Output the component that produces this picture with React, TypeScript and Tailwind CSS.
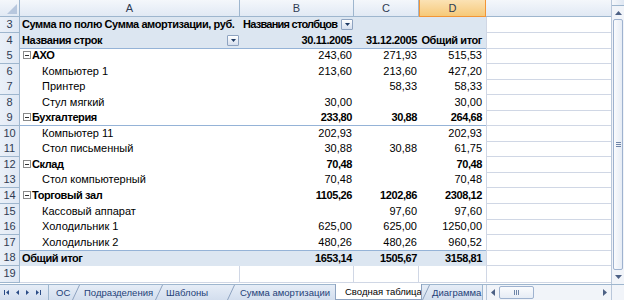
import React from "react";

const COLS = "grid grid-cols-[20px_220px_114px_65px_67px_125px]";
const ROWH = "h-[15.55px]";
const BOLD = " font-bold tracking-[-0.4px]";

type DataRow = {
  n: number;
  label: string;
  group?: boolean;
  b?: string;
  c?: string;
  d?: string;
  bold?: boolean;
  lineBelow?: boolean;
};

const data: DataRow[] = [
  { n: 5, label: "АХО", group: true, b: "243,60", c: "271,93", d: "515,53" },
  { n: 6, label: "Компьютер 1", b: "213,60", c: "213,60", d: "427,20" },
  { n: 7, label: "Принтер", c: "58,33", d: "58,33" },
  { n: 8, label: "Стул мягкий", b: "30,00", d: "30,00" },
  { n: 9, label: "Бухгалтерия", group: true, b: "233,80", c: "30,88", d: "264,68", bold: true, lineBelow: true },
  { n: 10, label: "Компьютер 11", b: "202,93", d: "202,93" },
  { n: 11, label: "Стол письменный", b: "30,88", c: "30,88", d: "61,75" },
  { n: 12, label: "Склад", group: true, b: "70,48", d: "70,48", bold: true },
  { n: 13, label: "Стол компьютерный", b: "70,48", d: "70,48" },
  { n: 14, label: "Торговый зал", group: true, b: "1105,26", c: "1202,86", d: "2308,12", bold: true },
  { n: 15, label: "Кассовый аппарат", c: "97,60", d: "97,60" },
  { n: 16, label: "Холодильник 1", b: "625,00", c: "625,00", d: "1250,00" },
  { n: 17, label: "Холодильник 2", b: "480,26", c: "480,26", d: "960,52" },
];

function RowNum({ n }: { n: number }) {
  return (
    <div className="bg-gradient-to-r from-[#eaf0f8] to-[#e0e8f4] border-r border-b border-[#9eb6ce] text-center text-[11px] leading-[15px] text-[#2f3b52]">
      {n}
    </div>
  );
}

function Dropdown() {
  return (
    <span className="absolute right-[1px] top-[2px] w-[12px] h-[11px] border border-[#8ea3c0] rounded-[1px] bg-gradient-to-b from-white to-[#d5dfee] flex items-center justify-center">
      <svg width="5" height="3" viewBox="0 0 5 3">
        <polygon points="0,0 5,0 2.5,3" fill="#1d3a63" />
      </svg>
    </span>
  );
}

function Collapse() {
  return (
    <span className="inline-flex w-[8px] h-[8px] border border-[#8a8a8a] bg-white items-center justify-center mr-[1px] align-middle relative top-[-1px]">
      <span className="block w-[4px] h-[1px] bg-[#333]" />
    </span>
  );
}

function ECell({ last }: { last?: boolean }) {
  return <div className={"border-l border-[#d0d7e5] " + (last ? "" : "border-b")} />;
}

export default function App() {
  return (
    <div className="w-[624px] h-[300px] overflow-hidden bg-white flex flex-col font-['Liberation_Sans',Arial,sans-serif] text-[11px] text-black">
      <div className="flex h-[284px]">
        {/* sheet */}
        <div className="w-[611px] h-[284px] overflow-hidden flex flex-col">
          {/* column headers */}
          <div className={COLS + " h-[17px] shrink-0"}>
            <div className="relative bg-gradient-to-b from-[#f4f7fb] to-[#e1e9f4] border-r border-b border-[#9eb6ce]">
              <svg className="absolute right-[2px] bottom-[2px]" width="10" height="10" viewBox="0 0 10 10">
                <polygon points="10,0 10,10 0,10" fill="#b7c7de" />
              </svg>
            </div>
            {["A", "B", "C"].map((l) => (
              <div
                key={l}
                className="bg-gradient-to-b from-[#f4f7fb] to-[#e1e9f4] border-r border-b border-[#9eb6ce] text-center leading-[16px] text-[#2f3b52]"
              >
                {l}
              </div>
            ))}
            <div className="bg-gradient-to-b from-[#fbe2b4] to-[#f6c978] border border-[#f29536] border-t-0 text-center leading-[16px] text-[#2f3b52]">
              D
            </div>
            <div className="bg-gradient-to-b from-[#f4f7fb] to-[#e1e9f4] border-b border-[#9eb6ce]" />
          </div>

          {/* row 3 */}
          <div className={COLS + " " + ROWH + " shrink-0"}>
            <RowNum n={3} />
            <div className="bg-[#dce6f1] relative">
              <span className={"absolute left-[2px] top-0 leading-[15px] whitespace-nowrap z-10" + BOLD}>
                Сумма по полю Сумма амортизации, руб.
              </span>
            </div>
            <div className="bg-[#dce6f1] relative">
              <span className="absolute left-[3px] top-0 leading-[15px] whitespace-nowrap font-bold tracking-[-0.75px]">
                Названия столбцов
              </span>
              <Dropdown />
            </div>
            <div className="bg-[#dce6f1]" />
            <div className="bg-[#dce6f1]" />
            <ECell />
          </div>

          {/* row 4 */}
          <div className={COLS + " " + ROWH + " shrink-0"}>
            <RowNum n={4} />
            <div className="bg-[#dce6f1] border-b border-[#95b3d7] relative">
              <span className={"absolute left-[2px] top-0 leading-[15px] whitespace-nowrap" + BOLD}>Названия строк</span>
              <Dropdown />
            </div>
            {["30.11.2005", "31.12.2005", "Общий итог"].map((t, i) => (
              <div
                key={t}
                className={
                  "bg-[#dce6f1] border-b border-[#95b3d7] text-right leading-[15px] whitespace-nowrap" +
                  BOLD +
                  (i === 2 ? " pr-[4px]" : " pr-[2px]")
                }
              >
                {t}
              </div>
            ))}
            <ECell />
          </div>

          {data.map((r) => {
            const line = r.lineBelow ? " border-b border-[#95b3d7]" : "";
            const w = r.bold ? BOLD : "";
            return (
              <div key={r.n} className={COLS + " " + ROWH + " shrink-0"}>
                <RowNum n={r.n} />
                <div
                  className={
                    "leading-[15px] whitespace-nowrap overflow-hidden" +
                    line +
                    (r.group ? " pl-[3px]" + BOLD : " pl-[22px]")
                  }
                >
                  {r.group && <Collapse />}
                  {r.label}
                </div>
                <div className={"text-right pr-[2px] leading-[15px]" + line + w}>{r.b ?? ""}</div>
                <div className={"text-right pr-[2px] leading-[15px]" + line + w}>{r.c ?? ""}</div>
                <div className={"text-right pr-[4px] leading-[15px]" + line + w}>{r.d ?? ""}</div>
                <ECell />
              </div>
            );
          })}

          {/* row 18 */}
          <div className={COLS + " " + ROWH + " shrink-0"}>
            <RowNum n={18} />
            <div className={"bg-[#dce6f1] border-t border-[#95b3d7] pl-[2px] leading-[14px]" + BOLD}>Общий итог</div>
            <div className={"bg-[#dce6f1] border-t border-[#95b3d7] text-right pr-[2px] leading-[14px]" + BOLD}>1653,14</div>
            <div className={"bg-[#dce6f1] border-t border-[#95b3d7] text-right pr-[2px] leading-[14px]" + BOLD}>1505,67</div>
            <div className={"bg-[#dce6f1] border-t border-[#95b3d7] text-right pr-[4px] leading-[14px]" + BOLD}>3158,81</div>
            <ECell />
          </div>

          {/* row 19 */}
          <div className={COLS + " h-[17px] shrink-0"}>
            <RowNum n={19} />
            <div className="border-r border-b border-[#d0d7e5]" />
            <div className="border-r border-b border-[#d0d7e5]" />
            <div className="border-r border-b border-[#d0d7e5]" />
            <div className="border-b border-[#d0d7e5]" />
            <ECell />
          </div>
        </div>

        {/* vertical scrollbar */}
        <div className="w-[13px] h-[284px] bg-[#f1f4f9] border-l border-[#b9c7da] flex flex-col">
          <div className="h-[6px] border-b border-[#9eb6ce] bg-gradient-to-r from-[#f6f8fb] to-[#dfe7f2]" />
          <div className="h-[13px] flex items-center justify-center">
            <svg width="7" height="4" viewBox="0 0 7 4">
              <polygon points="0,4 7,4 3.5,0" fill="#4d6185" />
            </svg>
          </div>
          <div className="flex-1 mx-[1px] rounded-[2px] border border-[#9eb2cf] bg-gradient-to-r from-[#fafbfd] to-[#e6ecf5] flex items-center justify-center">
            <div className="flex flex-col gap-[1px]">
              <div className="w-[5px] h-[1px] bg-[#6f85a8]" />
              <div className="w-[5px] h-[1px] bg-[#6f85a8]" />
              <div className="w-[5px] h-[1px] bg-[#6f85a8]" />
            </div>
          </div>
          <div className="h-[14px] flex items-center justify-center">
            <svg width="7" height="4" viewBox="0 0 7 4">
              <polygon points="0,0 7,0 3.5,4" fill="#4d6185" />
            </svg>
          </div>
        </div>
      </div>

      {/* sheet tabs bar */}
      <div className="h-[16px] flex border-t border-[#9eb6ce] bg-gradient-to-b from-[#e6edf7] to-[#d3deee] text-[9.5px] leading-[15px] text-[#1e3f78]">
        <div className="w-[49px] shrink-0 border-r border-[#9eb6ce] flex items-center">
          <svg width="48" height="15" viewBox="0 0 48 15">
            <rect x="4" y="5" width="1" height="5" fill="#2b4c86" />
            <polygon points="9,5 9,10 6,7.5" fill="#2b4c86" />
            <polygon points="19,5 19,10 16,7.5" fill="#2b4c86" />
            <polygon points="26,5 26,10 29,7.5" fill="#2b4c86" />
            <polygon points="36,5 36,10 39,7.5" fill="#2b4c86" />
            <rect x="40" y="5" width="1" height="5" fill="#2b4c86" />
          </svg>
        </div>
        <Tab w="w-[23px]" pl="pl-[7px]" text="ОС" />
        <Slash />
        <Tab w="w-[75px]" pl="pl-[4px]" text="Подразделения" />
        <Slash />
        <Tab w="w-[64px]" pl="pl-[3px]" text="Шаблоны" />
        <Slash />
        <Tab w="w-[100px]" pl="pl-[5px]" text="Сумма амортизации" />
        <div className="w-[87px] shrink-0 bg-white border-l border-r border-b border-[#8ea3c0] mt-[-1px] pl-[9px] text-black whitespace-nowrap overflow-hidden">
          Сводная таблица
        </div>
        <Slash />
        <div className="w-[52px] shrink-0 pl-[2px] whitespace-nowrap overflow-hidden">Диаграмма</div>
        {/* horizontal scrollbar */}
        <div className="w-[129px] shrink-0 flex items-center bg-[#f1f4f9] border-l border-[#9eb6ce]">
          <div className="w-[4px] h-full border-r border-[#b9c7da]" />
          <div className="w-[12px] h-full flex items-center justify-center">
            <svg width="4" height="7" viewBox="0 0 4 7">
              <polygon points="4,0 4,7 0,3.5" fill="#4d6185" />
            </svg>
          </div>
          <div className="w-[35px] h-[13px] rounded-[2px] border border-[#9eb2cf] bg-gradient-to-b from-[#fafbfd] to-[#e6ecf5] flex items-center justify-center gap-[1px]">
            <div className="w-[1px] h-[5px] bg-[#6f85a8]" />
            <div className="w-[1px] h-[5px] bg-[#6f85a8]" />
            <div className="w-[1px] h-[5px] bg-[#6f85a8]" />
          </div>
          <div className="flex-1" />
          <div className="w-[12px] h-full flex items-center justify-center">
            <svg width="4" height="7" viewBox="0 0 4 7">
              <polygon points="0,0 0,7 4,3.5" fill="#4d6185" />
            </svg>
          </div>
        </div>
        <div className="w-[13px] shrink-0 bg-[#f1f4f9] border-l border-[#b9c7da]" />
      </div>
    </div>
  );
}

function Tab({ w, pl, text }: { w: string; pl: string; text: string }) {
  return <div className={w + " " + pl + " shrink-0 whitespace-nowrap overflow-hidden"}>{text}</div>;
}

function Slash() {
  return (
    <svg className="shrink-0" width="8" height="15" viewBox="0 0 8 15">
      <line x1="0.5" y1="15" x2="7.5" y2="0" stroke="#8ea3c0" strokeWidth="1" />
    </svg>
  );
}
